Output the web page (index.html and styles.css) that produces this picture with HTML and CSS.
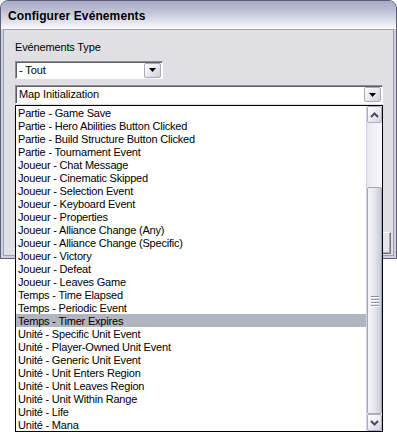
FILE: index.html
```html
<!DOCTYPE html>
<html>
<head>
<meta charset="utf-8">
<link rel="stylesheet" href="styles.css">
</head>
<body>
<div class="window">
  <div class="titlebar"><span class="title">Configurer Evénements</span></div>
  <div class="client">
    <div class="label">Evénements Type</div>
    <div class="combo combo-small">
      <span class="combo-text">- Tout</span>
      <span class="dd-btn"><svg width="7" height="4" viewBox="0 0 7 4"><path d="M0 0H7L3.5 4Z" fill="#000"/></svg></span>
    </div>
    <div class="combo combo-wide">
      <span class="combo-text">Map Initialization</span>
      <span class="dd-btn"><svg width="7" height="4" viewBox="0 0 7 4"><path d="M0 0H7L3.5 4Z" fill="#000"/></svg></span>
    </div>
    <div class="footer"><div class="btn">OK</div></div>
  </div>
</div>
<div class="dropdown">
  <ul class="items">
    <li>Partie - Game Save</li>
    <li>Partie - Hero Abilities Button Clicked</li>
    <li>Partie - Build Structure Button Clicked</li>
    <li>Partie - Tournament Event</li>
    <li>Joueur - Chat Message</li>
    <li>Joueur - Cinematic Skipped</li>
    <li>Joueur - Selection Event</li>
    <li>Joueur - Keyboard Event</li>
    <li>Joueur - Properties</li>
    <li>Joueur - Alliance Change (Any)</li>
    <li>Joueur - Alliance Change (Specific)</li>
    <li>Joueur - Victory</li>
    <li>Joueur - Defeat</li>
    <li>Joueur - Leaves Game</li>
    <li>Temps - Time Elapsed</li>
    <li>Temps - Periodic Event</li>
    <li class="selected">Temps - Timer Expires</li>
    <li>Unité - Specific Unit Event</li>
    <li>Unité - Player-Owned Unit Event</li>
    <li>Unité - Generic Unit Event</li>
    <li>Unité - Unit Enters Region</li>
    <li>Unité - Unit Leaves Region</li>
    <li>Unité - Unit Within Range</li>
    <li>Unité - Life</li>
    <li>Unité - Mana</li>
  </ul>
  <div class="scrollbar">
    <div class="sb-btn"><svg width="9" height="6" viewBox="0 0 9 6"><path d="M1 5L4.5 1.5L8 5" fill="none" stroke="#4a4a5e" stroke-width="2"/></svg></div>
    <div class="sb-track"></div>
    <div class="sb-thumb"><span class="grip"></span><span class="grip"></span><span class="grip"></span><span class="grip"></span></div>
    <div class="sb-btn"><svg width="9" height="6" viewBox="0 0 9 6"><path d="M1 1L4.5 4.5L8 1" fill="none" stroke="#4a4a5e" stroke-width="2"/></svg></div>
  </div>
</div>
</body>
</html>
```

FILE: styles.css
```css
* { box-sizing: border-box; }
body {
  margin: 0;
  background: #fff;
  font-family: "Liberation Sans", Arial, sans-serif;
  font-size: 11px;
  color: #000;
}
.window {
  width: 397px;
  height: 259px;
  border: 1px solid #5c5e7c;
  border-radius: 8px 8px 0 0;
  background: #cfcfdd;
  display: flex;
  flex-direction: column;
}
.titlebar {
  height: 28px;
  flex: none;
  border-radius: 7px 7px 0 0;
  background: linear-gradient(#a7a8c3, #c3c4d8 40%, #e6e6ef 78%, #fbfbfd);
  display: flex;
  align-items: center;
  padding: 1px 0 0 7px;
}
.title {
  font-weight: bold;
  font-size: 12px;
  letter-spacing: 0.1px;
}
.client {
  flex: 1;
  margin: 0 2px 2px;
  border: 1px solid #9e9eb2;
  background: #e0dfe3;
  display: flex;
  flex-direction: column;
  padding: 11px 2px 1px 11px;
}
.label {
  height: 13px;
  line-height: 13px;
  letter-spacing: -0.15px;
}
.combo {
  display: flex;
  align-items: center;
  justify-content: space-between;
  background: #fff;
  border-style: solid;
  border-width: 1px;
  border-color: #8e8e98 #fbfbfb #fbfbfb #8e8e98;
  box-shadow: inset 1px 1px 0 #5e5e66;
  padding: 1px 1px 1px 3px;
}
.combo-small {
  margin-top: 7px;
  width: 148px;
  height: 18px;
}
.combo-wide {
  margin-top: 6px;
  width: 368px;
  height: 19px;
}
.combo-text { line-height: 13px; letter-spacing: -0.1px; }
.dd-btn {
  width: 17px;
  height: 15px;
  border: 1px solid #a9a8bc;
  border-radius: 2px;
  background: linear-gradient(135deg, #ffffff, #e9e9f0 50%, #cfcfdc);
  display: flex;
  align-items: center;
  justify-content: center;
}
.footer {
  margin-top: auto;
  display: flex;
  justify-content: flex-end;
}
.btn {
  width: 75px;
  height: 22px;
  background: #e6e5ea;
  border: 1px solid;
  border-color: #fff #6f6f78 #6f6f78 #fff;
  box-shadow: inset -1px -1px 0 #a6a6b0;
  display: flex;
  align-items: center;
  justify-content: center;
}
.dropdown {
  position: absolute;
  left: 15px;
  top: 105px;
  width: 368px;
  height: 327px;
  border: 1px solid #000;
  background: #fff;
  display: flex;
}
.items {
  list-style: none;
  margin: 0;
  padding: 0;
  flex: 1;
}
.items li {
  height: 13px;
  line-height: 14px;
  padding-left: 2px;
  white-space: nowrap;
  letter-spacing: -0.2px;
}
.items li.selected { background: #b2b4bf; }
.scrollbar {
  width: 16px;
  display: flex;
  flex-direction: column;
  background: linear-gradient(to right, #e7e7ef, #fafafc);
  border-left: 1px solid #d2d2dc;
}
.sb-btn {
  height: 17px;
  flex: none;
  border: 1px solid #aeadc2;
  border-radius: 2px;
  background: linear-gradient(135deg, #ffffff, #ebebf2 50%, #d2d2de);
  display: flex;
  align-items: center;
  justify-content: center;
}
.sb-track { height: 64px; flex: none; }
.sb-thumb {
  height: 227px;
  flex: none;
  border: 1px solid #a6a6bb;
  border-radius: 2px;
  background: linear-gradient(to right, #f3f3f7, #e6e6ee 50%, #c9c9d8);
  display: flex;
  flex-direction: column;
  align-items: center;
  justify-content: center;
}
.grip {
  width: 8px;
  height: 1px;
  background: #8f8fa6;
  box-shadow: 0 1px 0 #fff;
  margin: 1px 0;
}
```
